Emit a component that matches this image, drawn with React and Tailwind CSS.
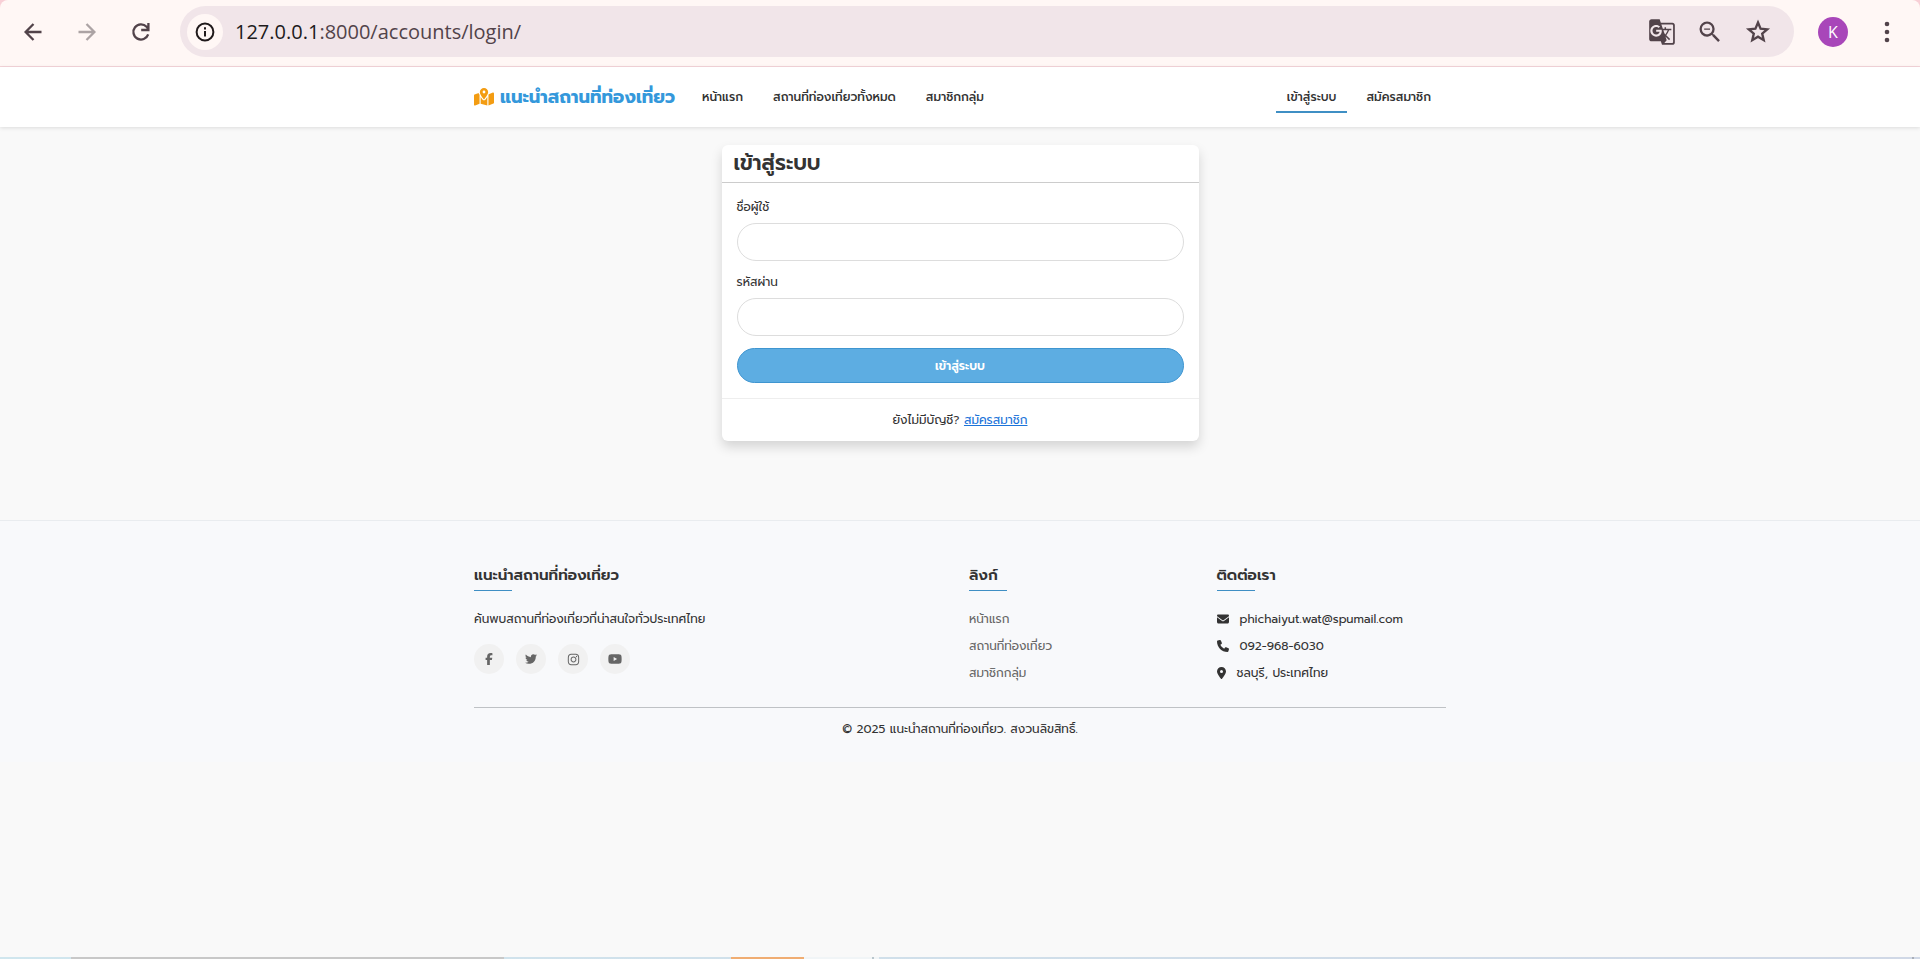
import { FaFacebookF, FaTwitter, FaInstagram, FaYoutube, FaEnvelope, FaPhone, FaLocationDot, FaMapLocationDot } from "react-icons/fa6";
import { MdZoomOut, MdGTranslate } from "react-icons/md";

function Glyph({ size = 24, weight = 2, children }) {
  return (
    <svg width={size} height={size} viewBox="0 0 24 24" fill="none" stroke="currentColor" strokeWidth={weight} aria-hidden="true">
      {children}
    </svg>
  );
}

function BrowserBar() {
  return (
    <div className="bg-[#f8cfd6]">
      <header className="flex h-[67px] items-start rounded-t-lg border-b border-[#f5d5da] bg-[#fff7f5] pt-1.5 pr-[18px] pl-[19px] font-['Open_Sans','Noto_Sans',sans-serif] text-[#52434a]">
        <div className="flex h-[51px] items-center gap-[26px]">
          <button aria-label="Back" className="flex w-7 justify-center">
            <Glyph weight={2.3}><path d="M20.5 12H5M12.5 4 4.6 12l7.9 8" /></Glyph>
          </button>
          <button aria-label="Forward" className="flex w-7 justify-center text-[#aca3a4]">
            <Glyph weight={2.3}><path d="M3.5 12H19M11.5 4l7.9 8-7.9 8" /></Glyph>
          </button>
          <button aria-label="Reload" className="flex w-7 justify-center">
            <Glyph weight={2.3}><path d="M19.2 14.4A7.6 7.6 0 1 1 17.6 6.8l2 2.4M19.4 3v7h-7.2" /></Glyph>
          </button>
        </div>
        <div className="ml-[25px] flex h-[51px] flex-1 items-center rounded-full bg-[#f1e5e9] pr-[22px] pl-[7px]">
          <button aria-label="Site information" className="flex size-9 items-center justify-center rounded-full bg-[#fff7f5] text-[#201a1b]">
            <Glyph><circle cx="12" cy="12" r="8.4" /><path d="M12 11v5.5M12 7.2v2.2" /></Glyph>
          </button>
          <p className="ml-3 flex-1 text-xl text-[#52434a]"><span className="text-[#201a1b]">127.0.0.1</span>:8000/accounts/login/</p>
          <div className="flex items-center gap-5">
            <button aria-label="Translate"><MdGTranslate size={28} /></button>
            <button aria-label="Zoom"><MdZoomOut size={28} /></button>
            <button aria-label="Bookmark">
              <Glyph size={28}><path d="M12 3.9l2.2 5.3 5.7.5-4.3 3.7 1.3 5.6-4.9-3-4.9 3 1.3-5.6-4.3-3.7 5.7-.5z" /></Glyph>
            </button>
          </div>
        </div>
        <div className="ml-6 flex h-[51px] items-center gap-6">
          <button className="size-[30px] rounded-full bg-[#a846b9] text-base text-white">K</button>
          <button aria-label="Menu">
            <svg width="30" height="30" viewBox="0 0 30 30" fill="currentColor" aria-hidden="true">
              <circle cx="15" cy="7" r="2.3" /><circle cx="15" cy="15" r="2.3" /><circle cx="15" cy="23" r="2.3" />
            </svg>
          </button>
        </div>
      </header>
    </div>
  );
}

function Navbar() {
  return (
    <nav className="h-15 bg-white shadow-[0_1px_4px_rgba(0,0,0,0.12)]">
      <div className="mx-auto flex h-full max-w-[990px] items-center px-[9px] font-medium">
        <a href="#" className="mr-3 flex items-center gap-1.5 text-lg font-bold text-[#3498db]">
          <FaMapLocationDot className="h-[18px] w-5 text-[#f39c12]" />แนะนำสถานที่ท่องเที่ยว
        </a>
        <a href="#" className="px-[15px] py-1.5">หน้าแรก</a>
        <a href="#" className="px-[15px] py-1.5">สถานที่ท่องเที่ยวทั้งหมด</a>
        <a href="#" className="px-[15px] py-1.5">สมาชิกกลุ่ม</a>
        <a href="#" className="mr-1 ml-auto border-y-2 border-t-transparent border-b-[#3f8fc4] px-[11px] py-[5px]">เข้าสู่ระบบ</a>
        <a href="#" className="px-[15px] py-1.5">สมัครสมาชิก</a>
      </div>
    </nav>
  );
}

function Field({ id, label, type }) {
  return (
    <div className="mb-3">
      <label htmlFor={id} className="mb-[7px] block">{label}</label>
      <input id={id} type={type} className="block h-[38px] w-full rounded-full border border-[#dddddd] bg-white px-4" />
    </div>
  );
}

function LoginCard() {
  return (
    <section className="mx-auto w-[477px] max-w-full rounded-md bg-white shadow-[0_6px_12px_rgba(0,0,0,0.15)]">
      <h1 className="h-[38px] border-b border-[#cccccc] px-3 text-[21px] leading-9 font-semibold">เข้าสู่ระบบ</h1>
      <form className="px-[15px] py-[15px]">
        <Field id="username" label="ชื่อผู้ใช้" type="text" />
        <Field id="password" label="รหัสผ่าน" type="password" />
        <button type="button" className="block h-[35px] w-full rounded-full border border-[#3f95d0] bg-[#5dade2] font-semibold text-white">เข้าสู่ระบบ</button>
      </form>
      <p className="border-t border-[#eeeeee] py-3 text-center">
        ยังไม่มีบัญชี? <a href="#" className="text-[#1a73d9] underline">สมัครสมาชิก</a>
      </p>
    </section>
  );
}

function FooterTitle({ children }) {
  return (
    <>
      <h2 className="text-[15px] leading-6 font-semibold">{children}</h2>
      <div className="mt-[3px] mb-[19px] h-px w-[38px] bg-[#3f8fc4]" />
    </>
  );
}

const socials = [
  ["Facebook", FaFacebookF, "size-3"],
  ["Twitter", FaTwitter, "size-3"],
  ["Instagram", FaInstagram, "size-[13px]"],
  ["YouTube", FaYoutube, "size-3.5"],
];

function Footer() {
  return (
    <footer className="border-t border-[#e9ecef] bg-[#f8f9fb] pt-[42px] pb-6">
      <div className="mx-auto max-w-[990px] px-[9px]">
        <div className="grid grid-cols-4 gap-x-[18px]">
          <div className="col-span-2">
            <FooterTitle>แนะนำสถานที่ท่องเที่ยว</FooterTitle>
            <p>ค้นพบสถานที่ท่องเที่ยวที่น่าสนใจทั่วประเทศไทย</p>
            <div className="mt-4 flex gap-3">
              {socials.map(([name, Icon, size]) => (
                <a key={name} href="#" aria-label={name} className="flex size-[30px] items-center justify-center rounded-full bg-[#f1f1f1] text-[#666666]"><Icon className={size} /></a>
              ))}
            </div>
          </div>
          <div>
            <FooterTitle>ลิงก์</FooterTitle>
            <ul className="space-y-[9px] text-[#666666]">
              <li><a href="#">หน้าแรก</a></li>
              <li><a href="#">สถานที่ท่องเที่ยว</a></li>
              <li><a href="#">สมาชิกกลุ่ม</a></li>
            </ul>
          </div>
          <div>
            <FooterTitle>ติดต่อเรา</FooterTitle>
            <ul className="space-y-[9px]">
              <li className="flex items-center gap-[11px]"><FaEnvelope className="size-3" />phichaiyut.wat@spumail.com</li>
              <li className="flex items-center gap-[11px]"><FaPhone className="size-3" />092-968-6030</li>
              <li className="flex items-center gap-[11px]"><FaLocationDot className="h-3 w-[9px]" />ชลบุรี, ประเทศไทย</li>
            </ul>
          </div>
        </div>
        <p className="mt-[25px] border-t border-[#bfc2c5] pt-3 text-center">© 2025 แนะนำสถานที่ท่องเที่ยว. สงวนลิขสิทธิ์.</p>
      </div>
    </footer>
  );
}

export default function App() {
  return (
    <div className="flex min-h-screen flex-col bg-[#f9f9f9] font-[Prompt,'Noto_Sans_Thai','Noto_Sans',sans-serif] text-xs leading-[18px] text-[#333333]">
      <BrowserBar />
      <Navbar />
      <main className="pt-[18px] pb-[79px]"><LoginCard /></main>
      <Footer />
      <div className="mt-auto flex h-0.5 bg-linear-to-r from-[#d0e6ee] to-[#d0d8e6]">
        <div className="ml-[71px] w-[433px] bg-[#c8c8c8]" />
        <div className="ml-[227px] w-[73px] bg-[#f0ad72]" />
        <div className="w-[68px] bg-[#f1f5f7]" />
        <div className="w-0.5 bg-[#b9c6cc]" />
        <div className="w-[5px] bg-[#f1f5f7]" />
        <div className="mr-1.5 ml-auto w-0.5 bg-[#a9afb8]" />
      </div>
    </div>
  );
}
